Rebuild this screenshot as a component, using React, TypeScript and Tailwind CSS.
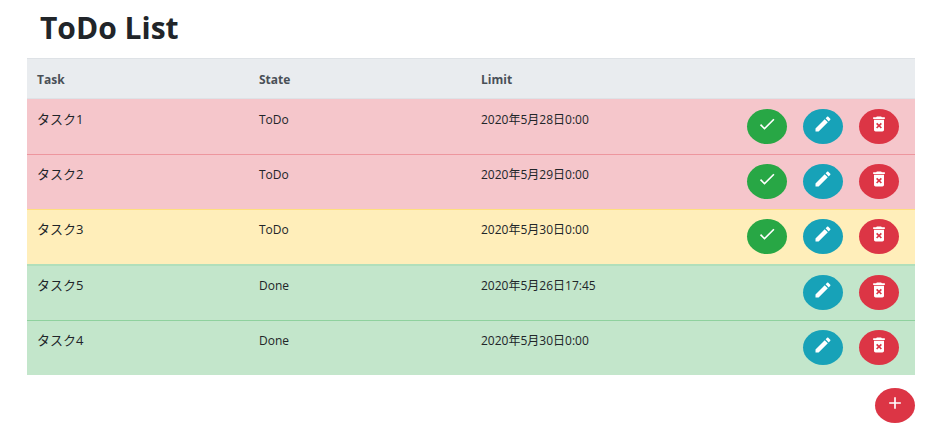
import React from 'react';

type Tone = 'danger' | 'warning' | 'success';

interface Task {
  name: string;
  state: 'ToDo' | 'Done';
  limit: string;
  tone: Tone;
  rule: string;
}

const tasks: Task[] = [
  { name: 'タスク1', state: 'ToDo', limit: '2020年5月28日0:00', tone: 'danger', rule: 'h-[55px] border-t border-[#f5c6cb]' },
  { name: 'タスク2', state: 'ToDo', limit: '2020年5月29日0:00', tone: 'danger', rule: 'h-[55px] border-t border-[#ed969e]' },
  { name: 'タスク3', state: 'ToDo', limit: '2020年5月30日0:00', tone: 'warning', rule: 'h-[55px] border-t border-[#ffdf7e]' },
  { name: 'タスク5', state: 'Done', limit: '2020年5月26日17:45', tone: 'success', rule: 'h-[56px] border-t-2 border-[#b1dfbb]' },
  { name: 'タスク4', state: 'Done', limit: '2020年5月30日0:00', tone: 'success', rule: 'h-[55px] border-t border-[#8fd19e]' },
];

const rowTone: Record<Tone, string> = {
  danger: 'bg-[#f5c6cb]',
  warning: 'bg-[#ffeeba]',
  success: 'bg-[#c3e6cb]',
};

const icons = {
  check: 'M21 7L9 19l-5.5-5.5 1.41-1.41L9 16.17 19.59 5.59L21 7z',
  pencil:
    'M20.71 7.04c.39-.39.39-1.04 0-1.41l-2.34-2.34c-.37-.39-1.02-.39-1.41 0l-1.84 1.83 3.75 3.75M3 17.25V21h3.75L17.81 9.93l-3.75-3.75L3 17.25z',
  trash:
    'M6 19c0 1.1.9 2 2 2h8c1.1 0 2-.9 2-2V7H6v12zm2.46-7.12l1.41-1.41L12 12.59l2.12-2.12 1.41 1.41L13.41 14l2.12 2.12-1.41 1.41L12 15.41l-2.12 2.12-1.41-1.41L10.59 14l-2.13-2.12zM15.5 4l-1-1h-5l-1 1H5v2h14V4h-3.5z',
  plus: 'M19 13h-6v6h-2v-6H5v-2h6V5h2v6h6v2z',
};

const buttonTone = {
  check: 'bg-[#28a745]',
  pencil: 'bg-[#17a2b8]',
  trash: 'bg-[#dc3545]',
  plus: 'bg-[#dc3545]',
};

function RoundButton({ icon, label }: { icon: keyof typeof icons; label: string }) {
  return (
    <button
      type="button"
      aria-label={label}
      className={`flex h-[35px] w-10 shrink-0 cursor-pointer justify-center rounded-[50%] pt-[5px] text-white ${buttonTone[icon]}`}
    >
      <svg viewBox="0 0 24 24" className="size-5" fill="currentColor" aria-hidden="true">
        <path d={icons[icon]} />
      </svg>
    </button>
  );
}

export default function App() {
  return (
    <main className="pr-[21px] pl-[27px] pt-2 font-['Open_Sans','Noto_Sans_CJK_JP',sans-serif] text-[12px] leading-5 text-[#212529]">
      <h1 className="mb-2.5 pl-[13px] text-[30px] leading-10 font-bold">ToDo List</h1>
      <table className="w-full table-fixed border-separate border-spacing-0 text-left">
        <thead>
          <tr className="h-[41px] bg-[#e9ecef] text-[#495057]">
            <th className="border-y border-[#dee2e6] px-2.5 pt-0.5 font-bold">Task</th>
            <th className="border-y border-[#dee2e6] px-2.5 pt-0.5 font-bold">State</th>
            <th className="border-y border-[#dee2e6] px-2.5 pt-0.5 font-bold">Limit</th>
            <th className="border-y border-[#dee2e6] px-2.5 pt-0.5" aria-label="Actions" />
          </tr>
        </thead>
        <tbody>
          {tasks.map((task) => (
            <tr key={task.name} className={`align-top ${rowTone[task.tone]}`}>
              <td className={`px-2.5 pt-[9px] text-[13px] ${task.rule}`}>{task.name}</td>
              <td className={`px-2.5 pt-2.5 ${task.rule}`}>{task.state}</td>
              <td className={`px-2.5 pt-2.5 ${task.rule}`}>{task.limit}</td>
              <td className={`px-4 pt-[9px] ${task.rule}`}>
                <div className="flex justify-end gap-4">
                  {task.state === 'ToDo' && <RoundButton icon="check" label={`Complete ${task.name}`} />}
                  <RoundButton icon="pencil" label={`Edit ${task.name}`} />
                  <RoundButton icon="trash" label={`Delete ${task.name}`} />
                </div>
              </td>
            </tr>
          ))}
        </tbody>
      </table>
      <div className="mt-[13px] flex justify-end">
        <RoundButton icon="plus" label="Add task" />
      </div>
    </main>
  );
}
